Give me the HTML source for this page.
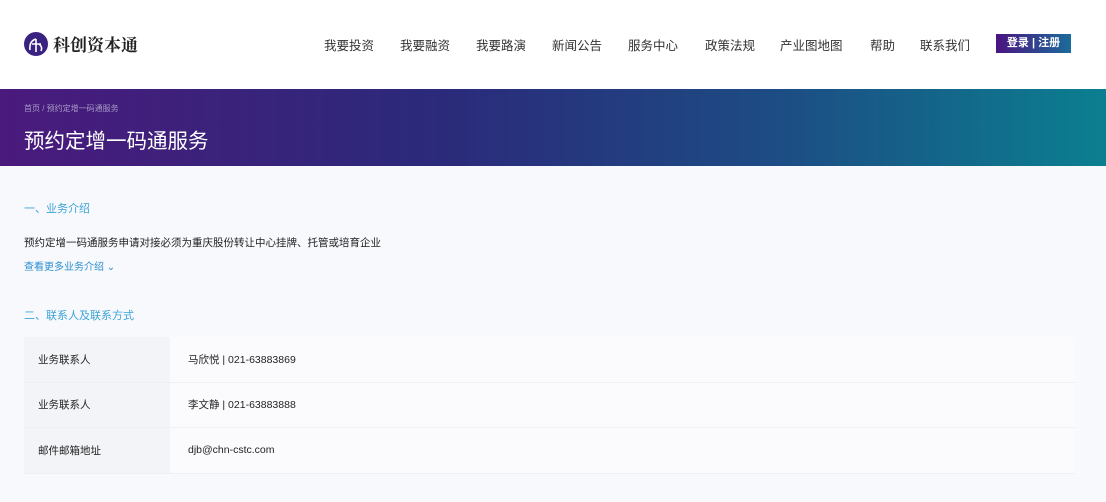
<!DOCTYPE html>
<html><head><meta charset="utf-8"><style>
*{margin:0;padding:0;box-sizing:border-box}
body{width:1106px;height:502px;overflow:hidden;background:#f8f9fd;font-family:"Liberation Sans","Noto Sans CJK SC",sans-serif;color:#222}
.hdr{position:absolute;left:0;top:0;width:1106px;height:89px;background:#fff}
.logo{position:absolute;left:24px;top:31px;display:flex;align-items:center}
.logo .c{width:24px;height:24px;border-radius:50%;background:#3a2380;position:relative;overflow:hidden}
.logo span{font-family:"Noto Serif CJK SC",serif;font-weight:700;font-size:17px;margin-left:5px;color:#222}
.nav{position:absolute;top:35px;font-size:12.5px;color:#333;white-space:nowrap}
.btn{position:absolute;left:996px;top:34px;width:75px;height:19px;background:linear-gradient(90deg,#4a1480,#1a6c9a);color:#fff;font-size:11px;text-align:center;line-height:19px;font-weight:700}
.ban{position:absolute;left:0;top:89px;width:1106px;height:77px;background:linear-gradient(90deg,#4a1a7c 0%,#2b2a7a 40%,#1d4c84 70%,#0b7f90 100%)}
.bc{position:absolute;left:24px;top:14px;font-size:8px;color:#a89ac8}
.tt{position:absolute;left:24px;top:35px;font-size:20.5px;color:#fff}
.sec{position:absolute;left:24px;font-size:11px;color:#3ba3d8}
.tbl{position:absolute;left:24px;top:337px;width:1051px}
.row{height:45.5px;display:flex;border-bottom:1px solid #eef0f4;background:#fbfbfd;font-size:10.5px;align-items:center}
.row .l{width:146px;height:100%;background:#f3f4f7;padding-left:14px;display:flex;align-items:center}
.row .r{padding-left:18px}
</style></head><body>
<div class="hdr">
<div class="logo"><div class="c"><svg width="24" height="24" viewBox="0 0 24 24"><path d="M6 18 Q5 9 12 7 M12 7 V20 M8 12 H17 M15 12 Q19 15 17 19" stroke="#fff" stroke-width="1.6" fill="none"/></svg></div><span>科创资本通</span></div>
<div class="nav" style="left:324px">我要投资</div>
<div class="nav" style="left:400px">我要融资</div>
<div class="nav" style="left:476px">我要路演</div>
<div class="nav" style="left:552px">新闻公告</div>
<div class="nav" style="left:628px">服务中心</div>
<div class="nav" style="left:705px">政策法规</div>
<div class="nav" style="left:780px">产业图地图</div>
<div class="nav" style="left:870px">帮助</div>
<div class="nav" style="left:920px">联系我们</div>
<div class="btn">登录 | 注册</div>
</div>
<div class="ban"><div class="bc">首页 / 预约定增一码通服务</div><div class="tt">预约定增一码通服务</div></div>
<div class="sec" style="top:200px">一、业务介绍</div>
<div style="position:absolute;left:24px;top:235px;font-size:10.5px">预约定增一码通服务申请对接必须为重庆股份转让中心挂牌、托管或培育企业</div>
<div class="sec" style="top:258px;font-size:10px;color:#2a8fd0">查看更多业务介绍 ⌄</div>
<div class="sec" style="top:307px">二、联系人及联系方式</div>
<div class="tbl">
<div class="row"><div class="l">业务联系人</div><div class="r">马欣悦 | 021-63883869</div></div>
<div class="row"><div class="l">业务联系人</div><div class="r">李文静 | 021-63883888</div></div>
<div class="row"><div class="l">邮件邮箱地址</div><div class="r">djb@chn-cstc.com</div></div>
</div>
</body></html>
